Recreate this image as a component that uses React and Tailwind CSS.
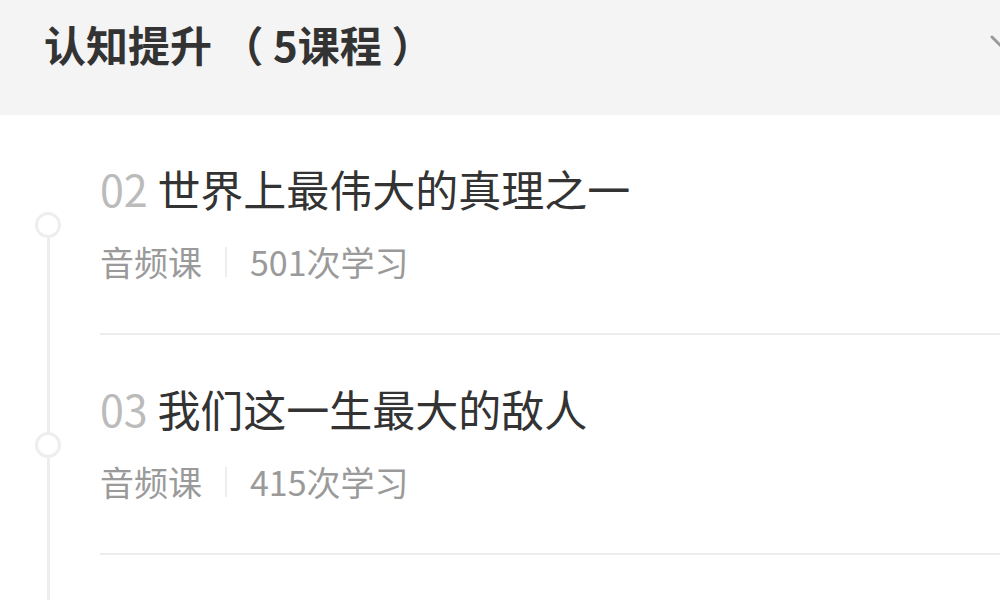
import React from "react";

const items = [
  { no: "02", title: "世界上最伟大的真理之一", count: "501次学习", first: true },
  { no: "03", title: "我们这一生最大的敌人", count: "415次学习", first: false },
];

function Item({ no, title, count, first }) {
  return (
    <div className="flex h-[220px]">
      <div className="flex w-[96px] shrink-0 flex-col items-center">
        <div className={`h-[97px] w-[3px] ${first ? "bg-transparent" : "bg-[#eeeeee]"}`} />
        <div className="h-[26px] w-[26px] rounded-full border-[3px] border-[#eeeeee] bg-white" />
        <div className="w-[3px] flex-1 bg-[#eeeeee]" />
      </div>
      <div className="ml-[4px] flex flex-1 flex-col border-b-2 border-[#ececec] pt-[47px]">
        <div className="h-[52px] whitespace-nowrap text-[43px] leading-[52px] text-[#333333]">
          <span className="text-[#bbbbbb]">{no}</span> {title}
        </div>
        <div className="mt-[28px] flex h-[40px] items-center whitespace-nowrap text-[34px] leading-[40px] text-[#9a9a9a]">
          <span>音频课</span>
          <span className="mx-[23px] h-[30px] w-[2px] bg-[#eeeeee]" />
          <span>{count}</span>
        </div>
      </div>
    </div>
  );
}

export default function App() {
  return (
    <div
      className="h-[600px] w-[1000px] overflow-hidden bg-white"
      style={{ fontFamily: '"Noto Sans CJK SC", "Noto Sans", sans-serif' }}
    >
      <div className="flex h-[115px] items-start justify-between overflow-hidden bg-[#f4f4f4] pl-[44px]">
        <div className="mt-[19px] text-[42px] font-bold leading-[50px] text-[#333333]">认知提升 （ 5课程 ）</div>
        <svg width="28" height="28" viewBox="0 0 28 28" className="mr-[-18px] mt-[33px] shrink-0">
          <path d="M2 4 L14 16 L26 4" fill="none" stroke="#9a9a9a" strokeWidth="3" strokeLinecap="round" />
        </svg>
      </div>
      <div>
        {items.map((it) => (
          <Item key={it.no} {...it} />
        ))}
        <div className="flex h-[60px]">
          <div className="flex w-[96px] shrink-0 flex-col items-center">
            <div className="w-[3px] flex-1 bg-[#eeeeee]" />
          </div>
        </div>
      </div>
    </div>
  );
}
